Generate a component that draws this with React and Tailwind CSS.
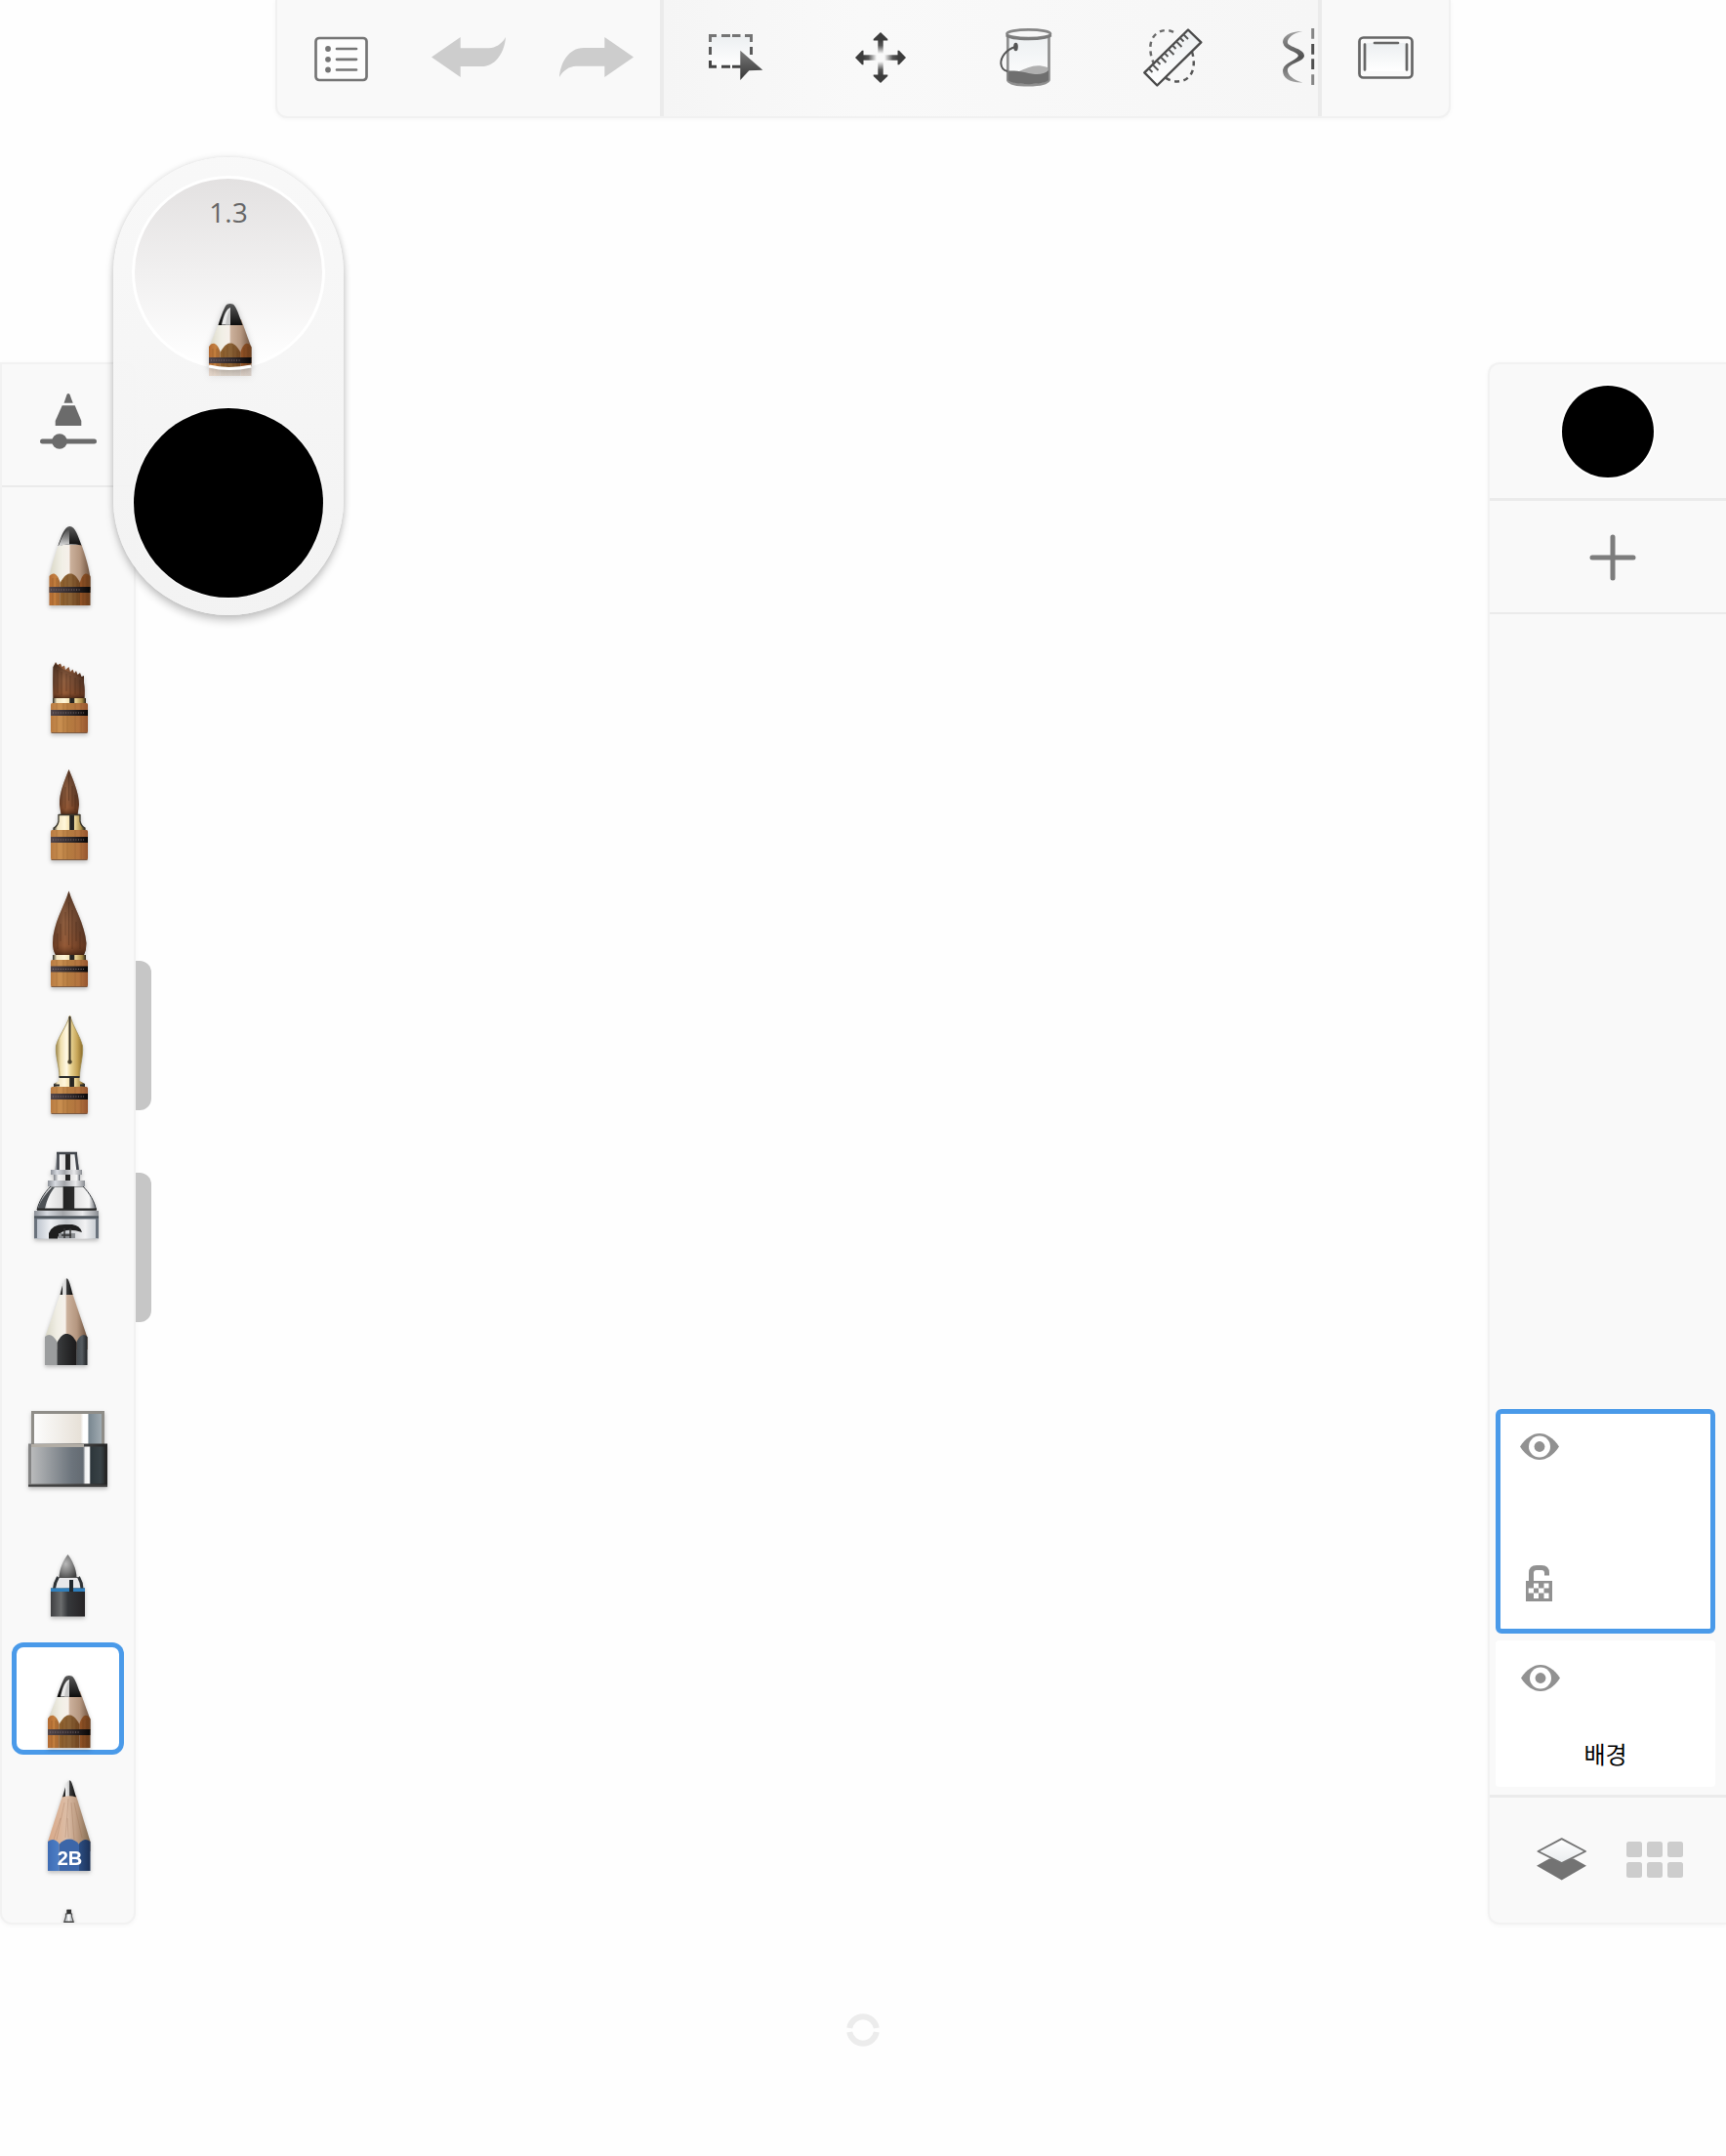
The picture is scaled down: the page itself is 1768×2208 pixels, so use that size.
import React, { useState } from 'react';
import clsx from 'clsx';

const BAND = { x: 40, width: 38, height: 6 };

// gradients shared by every drawing on the page
function PaintDefs() {
  return (
    <svg className="absolute size-0" aria-hidden="true">
      <defs>
        <linearGradient id="lead">
          <stop offset="0" stopColor="#333" />
          <stop offset="0.18" stopColor="#222" />
          <stop offset="0.24" stopColor="#eee" />
          <stop offset="0.48" stopColor="#ccc" />
          <stop offset="0.54" stopColor="#3a3a3a" />
          <stop offset="1" stopColor="#0c0c0c" />
        </linearGradient>
        <linearGradient id="softLead" x2="0" y2="1">
          <stop offset="0" stopColor="#4b4b4b" />
          <stop offset="0.5" stopColor="#8d8d8d" />
          <stop offset="1" stopColor="#e9e9e9" />
        </linearGradient>
        <linearGradient id="darkLead" x2="0" y2="1">
          <stop offset="0" stopColor="#585858" />
          <stop offset="1" stopColor="#0d0d0d" />
        </linearGradient>
        <linearGradient id="cone">
          <stop offset="0" stopColor="#d9d7c6" />
          <stop offset="0.3" stopColor="#f1efe6" />
          <stop offset="0.48" stopColor="#f6f0ea" />
          <stop offset="0.52" stopColor="#cbb09b" />
          <stop offset="0.75" stopColor="#b59780" />
          <stop offset="1" stopColor="#6b4f3b" />
        </linearGradient>
        <linearGradient id="rawWood">
          <stop offset="0" stopColor="#d9a887" />
          <stop offset="0.45" stopColor="#dcbda6" />
          <stop offset="0.7" stopColor="#bb9a80" />
          <stop offset="1" stopColor="#80694f" />
        </linearGradient>
        <linearGradient id="petalLeft">
          <stop offset="0" stopColor="#b26a32" />
          <stop offset="0.6" stopColor="#c4803f" />
          <stop offset="1" stopColor="#9c6230" />
        </linearGradient>
        <linearGradient id="petalMid">
          <stop offset="0" stopColor="#8f602c" />
          <stop offset="0.5" stopColor="#8a6236" />
          <stop offset="1" stopColor="#704520" />
        </linearGradient>
        <linearGradient id="petalRight">
          <stop offset="0" stopColor="#935326" />
          <stop offset="1" stopColor="#6d3f1d" />
        </linearGradient>
        <linearGradient id="handle">
          <stop offset="0" stopColor="#b87a41" />
          <stop offset="0.25" stopColor="#c98f50" />
          <stop offset="0.5" stopColor="#b57b40" />
          <stop offset="0.75" stopColor="#b3743f" />
          <stop offset="1" stopColor="#95552f" />
        </linearGradient>
        <linearGradient id="band">
          <stop offset="0" stopColor="#54474a" />
          <stop offset="0.6" stopColor="#2c2527" />
          <stop offset="1" stopColor="#080606" />
        </linearGradient>
        <linearGradient id="bristle">
          <stop offset="0" stopColor="#4e2d1c" />
          <stop offset="0.35" stopColor="#96603e" />
          <stop offset="0.6" stopColor="#77492f" />
          <stop offset="1" stopColor="#402417" />
        </linearGradient>
        <linearGradient id="bristleShade" x2="0" y2="1">
          <stop offset="0" stopColor="#3a2418" stopOpacity="0.75" />
          <stop offset="0.5" stopColor="#7a5a45" stopOpacity="0.2" />
          <stop offset="0.85" stopColor="#93502a" stopOpacity="0.35" />
          <stop offset="1" stopColor="#3a1c0d" stopOpacity="0.7" />
        </linearGradient>
        <linearGradient id="brass">
          <stop offset="0" stopColor="#2c2820" />
          <stop offset="0.12" stopColor="#f1e4c0" />
          <stop offset="0.35" stopColor="#fff6da" />
          <stop offset="0.5" stopColor="#f4e2b0" />
          <stop offset="0.52" stopColor="#222" />
          <stop offset="0.64" stopColor="#292622" />
          <stop offset="0.67" stopColor="#efd99c" />
          <stop offset="0.88" stopColor="#a98a45" />
          <stop offset="1" stopColor="#292318" />
        </linearGradient>
        <linearGradient id="nib">
          <stop offset="0" stopColor="#9b8449" />
          <stop offset="0.18" stopColor="#f0e0b0" />
          <stop offset="0.4" stopColor="#fff8e4" />
          <stop offset="0.55" stopColor="#ead495" />
          <stop offset="0.8" stopColor="#c5a456" />
          <stop offset="1" stopColor="#8a6b2a" />
        </linearGradient>
        <linearGradient id="chrome">
          <stop offset="0" stopColor="#7b7f86" />
          <stop offset="0.18" stopColor="#f4f4f4" />
          <stop offset="0.43" stopColor="#dcdcdc" />
          <stop offset="0.45" stopColor="#222" />
          <stop offset="0.62" stopColor="#2b2b2b" />
          <stop offset="0.64" stopColor="#e3e3e3" />
          <stop offset="0.88" stopColor="#f7f7f7" />
          <stop offset="1" stopColor="#5b5f66" />
        </linearGradient>
        <linearGradient id="steel">
          <stop offset="0" stopColor="#8c9097" />
          <stop offset="0.2" stopColor="#d7dae0" />
          <stop offset="0.45" stopColor="#a3a5a9" />
          <stop offset="0.75" stopColor="#e9e9eb" />
          <stop offset="1" stopColor="#8a8d92" />
        </linearGradient>
        <linearGradient id="steelLight">
          <stop offset="0" stopColor="#b9c0ca" />
          <stop offset="0.25" stopColor="#eef0f3" />
          <stop offset="0.5" stopColor="#c3c6ca" />
          <stop offset="0.8" stopColor="#f2f2f3" />
          <stop offset="1" stopColor="#c2c7cd" />
        </linearGradient>
        <linearGradient id="graphiteMid">
          <stop offset="0" stopColor="#3b3d3f" />
          <stop offset="0.7" stopColor="#232324" />
          <stop offset="1" stopColor="#1c1a1b" />
        </linearGradient>
        <linearGradient id="graphiteRight">
          <stop offset="0" stopColor="#474d52" />
          <stop offset="0.5" stopColor="#555b60" />
          <stop offset="1" stopColor="#1f2123" />
        </linearGradient>
        <linearGradient id="rubber">
          <stop offset="0" stopColor="#fdfdfd" />
          <stop offset="0.68" stopColor="#e7e1d8" />
          <stop offset="0.72" stopColor="#fff" />
          <stop offset="0.78" stopColor="#fff" />
          <stop offset="0.8" stopColor="#798790" />
          <stop offset="1" stopColor="#a5afb5" />
        </linearGradient>
        <linearGradient id="sleeve">
          <stop offset="0" stopColor="#bcbdbe" />
          <stop offset="0.55" stopColor="#6c747c" />
          <stop offset="0.7" stopColor="#646b72" />
          <stop offset="0.73" stopColor="#eee" />
          <stop offset="0.78" stopColor="#fff" />
          <stop offset="0.8" stopColor="#2d363b" />
          <stop offset="0.93" stopColor="#394246" />
          <stop offset="1" stopColor="#252829" />
        </linearGradient>
        <linearGradient id="sleeveEdge">
          <stop offset="0" stopColor="#858585" />
          <stop offset="1" stopColor="#262626" />
        </linearGradient>
        <radialGradient id="felt" cx="0.38" cy="0.42" r="0.75">
          <stop offset="0" stopColor="#b9b9b9" />
          <stop offset="0.5" stopColor="#7f7f7f" />
          <stop offset="1" stopColor="#3f3f3f" />
        </radialGradient>
        <linearGradient id="marker">
          <stop offset="0" stopColor="#3e3f41" />
          <stop offset="0.3" stopColor="#6a6c6d" />
          <stop offset="0.5" stopColor="#36383b" />
          <stop offset="1" stopColor="#262325" />
        </linearGradient>
        <linearGradient id="blueLeft">
          <stop offset="0" stopColor="#3f6cb4" />
          <stop offset="1" stopColor="#4d7fc6" />
        </linearGradient>
        <linearGradient id="blueRight">
          <stop offset="0" stopColor="#2c4e83" />
          <stop offset="1" stopColor="#1b3157" />
        </linearGradient>
        <linearGradient id="ink" x2="0" y2="1">
          <stop offset="0" stopColor="#7b7b7b" />
          <stop offset="1" stopColor="#353535" />
        </linearGradient>
        <linearGradient id="glass" x2="0" y2="1">
          <stop offset="0" stopColor="#eceff1" />
          <stop offset="1" stopColor="#ffffff" />
        </linearGradient>
        <linearGradient id="glassDown" x2="0" y2="1">
          <stop offset="0" stopColor="#ffffff" />
          <stop offset="1" stopColor="#e9ecee" />
        </linearGradient>
        <linearGradient id="fade" x2="0" y2="1">
          <stop offset="0" stopColor="#3c3c3c" />
          <stop offset="0.4" stopColor="#555" />
          <stop offset="1" stopColor="#555" stopOpacity="0" />
        </linearGradient>
        <linearGradient id="curl" x2="0" y2="1">
          <stop offset="0" stopColor="#a0a0a0" />
          <stop offset="0.5" stopColor="#505050" />
          <stop offset="1" stopColor="#a0a0a0" />
        </linearGradient>
        <clipPath id="insideDial">
          <path d="M25 25H90V96.500Q57 105 25 96.500Z" />
        </clipPath>
        <clipPath id="belowDial">
          <path d="M25 96.500Q57 105 90 96.500V120H25Z" />
        </clipPath>
      </defs>
    </svg>
  );
}

function Handle({ top, band }) {
  return (
    <g>
      <rect x="40" y={top} width="38" height={108.5 - top} rx="1.5" fill="url(#handle)" />
      <path
        d={`M46 ${top}V108M53 ${top}V108M57 ${top}V108M65 ${top}V108M71 ${top}V108`}
        stroke="#7d4a22"
        strokeOpacity="0.25"
      />
      <rect {...BAND} y={band} fill="url(#band)" />
      <path d={`M42 ${band + 3}H74`} stroke="#85787a" strokeWidth="1" strokeDasharray="1 1.6" />
      <path d="M40.500 108.500H77.500" stroke="#5e3c26" strokeOpacity="0.7" />
    </g>
  );
}

function Petals() {
  return (
    <g>
      <path d="M37 78C40 73 45 73 48.500 83V108H37Z" fill="url(#petalLeft)" />
      <path d="M69.500 83C73 73 77 73 80.500 78V108H69.500Z" fill="url(#petalRight)" />
      <path d="M48.500 84C53 76 56 74.500 59 74.500C62 74.500 65 76 69.500 84V108H48.500Z" fill="url(#petalMid)" />
      <path d="M41 80V108M45 80V108M52 82V108M56 77V108M62 77V108M66 82V108M73 79V108M77 78V108" stroke="#5c3310" strokeOpacity="0.25" />
      <rect x="37" y="89" width="43.500" height="6" fill="url(#band)" />
      <path d="M39 92H70" stroke="#85787a" strokeDasharray="1 1.6" />
    </g>
  );
}

function CharcoalTip() {
  return (
    <g>
      <path d="M49 50L37 79V90H80.500V79L70 50Z" fill="url(#cone)" />
      <path d="M46.500 56C49 48 52 40 54 36.500C56 33.300 61.500 33.300 63.500 36.500C66 40 69 49 71.500 56Z" fill="url(#darkLead)" />
      <path d="M50 55.500C52 46 55 39 59 38V55.500Z" fill="#e9e9e9" />
      <path d="M54 55.500C55 48 57 41 59 39V55.500Z" fill="#c8c8c8" />
      <Petals />
    </g>
  );
}

const BRUSHES = [
  {
    name: 'Pencil',
    art: (
      <g>
        <path d="M48 46C43 60 39.500 72 38.500 80V92H80.500V80C79 68 75 56 71.500 46Z" fill="url(#cone)" />
        <path d="M47.500 47C51 37 54 27 59.500 27C65 27 68 37 71.500 46.500Q59 44 47.500 47Z" fill="url(#darkLead)" />
        <path d="M49 44.500C52 36 55 31 59 30V45.500Q52 45 47.500 48Z" fill="url(#softLead)" />
        <path d="M38.500 78C42 74 46 74 49.500 84V108H38.500Z" fill="url(#petalLeft)" />
        <path d="M70 84C73 74 77 74 80.500 78V108H70Z" fill="url(#petalRight)" />
        <path d="M49.500 85C54 77 57 75.500 60 75.500C63 75.500 66 77 70 85V108H49.500Z" fill="url(#petalMid)" />
        <path d="M42 80V108M46 80V108M53 82V108M57 77V108M63 77V108M67 82V108M73 79V108M77 78V108" stroke="#5c3310" strokeOpacity="0.25" />
        <rect x="38.500" y="89" width="42" height="6" fill="url(#band)" />
        <path d="M40 92H70" stroke="#85787a" strokeDasharray="1 1.6" />
      </g>
    ),
  },
  {
    name: 'Flat brush',
    art: (
      <g>
        <path d="M42.500 73C42 60 42 50 42.500 41L45 36L47 39L50 37.500L51.500 41L54 39.500L55 44L58.500 41L60 46L62.500 43.500L64 47.500L66 45L67.500 49L70 47L71.500 51L74 50V57C75 62 75 68 74.500 73Z" fill="url(#bristle)" />
        <path d="M42.500 73C42 60 42 50 42.500 41L45 38L52 43L60 47L68 51L74 53V57C75 62 75 68 74.500 73Z" fill="url(#bristleShade)" />
        <path d="M47 44V68M51 46V70M56 48V66M60 50V71M65 52V69M70 54V70" stroke="#2f180b" strokeOpacity="0.3" />
        <rect x="42" y="73" width="34" height="5" fill="url(#brass)" />
        <Handle top={78} band={85} />
      </g>
    ),
  },
  {
    name: 'Round brush',
    art: (
      <g>
        <path d="M58.500 16C54 28 48.500 40 49 52L50.500 62H67.500L69 52C69 40 63 27 58.500 16Z" fill="url(#bristle)" />
        <path d="M58.500 16C54 28 48.500 40 49 52L50.500 62H67.500L69 52C69 40 63 27 58.500 16Z" fill="url(#bristleShade)" />
        <path d="M58.500 22V48M55 34V56M62 33V54M65 42V58" stroke="#2f180b" strokeOpacity="0.3" />
        <path d="M48 62H70V69Q71 74 75 76V78H43V76Q47 74 48 69Z" fill="url(#brass)" />
        <path d="M48 62V69Q47 74 43 76V78M70 62V69Q71 74 75 76V78M48 62.500H70" fill="none" stroke="#3a362c" strokeWidth="1.300" />
        <Handle top={78} band={85} />
      </g>
    ),
  },
  {
    name: 'Wash brush',
    art: (
      <g>
        <path d="M58.500 10.500C54 26 42 44 42 64Q42 71 45 76H74Q76.500 71 76.500 64C75 44 63 26 58.500 10.500Z" fill="url(#bristle)" />
        <path d="M58.500 10.500C54 26 42 44 42 64Q42 71 45 76H74Q76.500 71 76.500 64C75 44 63 26 58.500 10.500Z" fill="url(#bristleShade)" />
        <path d="M58.500 22V66M55 32V56M62 30V70M50 44V62M66 42V62M70 52V70M47 54V70" stroke="#2f180b" strokeOpacity="0.3" />
        <rect x="42" y="76" width="34" height="5" fill="url(#brass)" />
        <Handle top={81} band={87.5} />
      </g>
    ),
  },
  {
    name: 'Fountain pen',
    art: (
      <g>
        <path d="M59.500 8C56 20 48 29 45.500 39C44.500 50 49 60 49 71H69.500C69.500 60 73.500 50 72.500 39C70 29 63 20 59.500 8Z" fill="url(#nib)" stroke="#a08b4e" strokeWidth="0.800" />
        <path d="M59.500 9V55" stroke="#383225" strokeWidth="2" />
        <circle cx="59.500" cy="55.500" r="2.200" fill="#4c432e" />
        <path d="M48.500 71H69.500V75L75 78V81H43V78L48.500 75Z" fill="url(#brass)" />
        <path d="M48.500 71H69.500M43 79.500H49M70 79.500H75" stroke="#2b2b2b" strokeWidth="2" />
        <Handle top={81} band={88} />
      </g>
    ),
  },
  {
    name: 'Airbrush',
    art: (
      <g>
        <path d="M46.500 18.500H66.500L69 36H44.500Z" fill="url(#chrome)" />
        <path d="M47.500 18V36M65.500 18L67.500 36M46 19H67" stroke="#42464c" strokeWidth="2.500" />
        <rect x="43" y="41" width="27" height="6" fill="url(#chrome)" />
        <rect x="40" y="36" width="32" height="5" fill="url(#steel)" />
        <path d="M40 53H73C80 60 85 69 86.500 77H26C28 68 33 60 40 53Z" fill="url(#chrome)" stroke="#33373b" />
        <path d="M41 54C34 61 29 69 27 76H34C36 67 39 60 44 54Z" fill="#4c5054" />
        <path d="M26 76.500H87" stroke="#262626" strokeWidth="2" />
        <rect x="37" y="47" width="38" height="6" fill="url(#steel)" />
        <rect x="23" y="78" width="66" height="28.500" fill="url(#steel)" />
        <rect x="24" y="85.500" width="64" height="21" fill="url(#steelLight)" />
        <path d="M24.500 106V85H87.500V106" fill="none" stroke="#6a727c" strokeWidth="3" />
        <path d="M23 84.500H89" stroke="#4b5258" strokeWidth="2" />
        <path d="M38 106.500V101Q41 92 54 92H62Q70 93 72 100Q60 96 53 99Q48 101 47 106.500Z" fill="#1f1f1f" />
        <path d="M48 106V101H65V106Z" fill="#8a8d90" />
        <path d="M51 103H61M54 96V106M60 96V106" stroke="#333" strokeWidth="1.500" />
      </g>
    ),
  },
  {
    name: 'Drawing pencil',
    art: (
      <g>
        <path d="M50 32L34 78V90H77.500V78L62 32Z" fill="url(#cone)" />
        <path d="M49.500 34C51 28 53 20 54.500 18Q56 16.500 57.500 18C59 20 61 28 62.500 34Z" fill="url(#lead)" />
        <path d="M34 77Q40 71 46.500 82V106H34Z" fill="#9b9d9e" />
        <path d="M66.500 82Q72 71 77.500 77V106H66.500Z" fill="url(#graphiteRight)" />
        <path d="M46.500 83C50 76 53 74 56 74C60 74 63 76 66.500 83V106H46.500Z" fill="url(#graphiteMid)" />
      </g>
    ),
  },
  {
    name: 'Eraser',
    art: (
      <g>
        <rect x="21.500" y="24.500" width="72" height="35" fill="url(#rubber)" stroke="#8f8d88" strokeWidth="3" />
        <rect x="18.500" y="58" width="78" height="41" fill="url(#sleeve)" stroke="url(#sleeveEdge)" strokeWidth="3" />
        <path d="M20 58.500H74" stroke="#b2ada5" strokeWidth="3" />
        <path d="M17 99.500H98" stroke="#3e3e3e" strokeWidth="2" />
      </g>
    ),
  },
  {
    name: 'Marker',
    art: (
      <g>
        <path d="M57.500 40C53 46 49 54 48.500 63H66.500C66 54 62 46 57.500 40Z" fill="url(#felt)" />
        <path d="M46.500 63H69L73 75.500H43Z" fill="#e8e8ea" />
        <path d="M47.500 63Q44 69 43.500 75M68.500 63Q72 69 72 75" fill="none" stroke="#2f3336" strokeWidth="3" />
        <rect x="40" y="74.500" width="35" height="29" fill="url(#marker)" />
        <path d="M40 76.300H75" stroke="#2f7fbc" strokeWidth="3.500" />
        <rect x="59" y="66" width="4" height="12" fill="#20282e" />
        <path d="M47 63.500H69" stroke="#555" />
      </g>
    ),
  },
  { name: 'Charcoal pencil', art: <CharcoalTip /> },
  {
    name: '2B pencil',
    art: (
      <g>
        <path d="M52 27L37 74V84H80.500V74L66 27Z" fill="url(#rawWood)" />
        <path d="M54 34L46 72M58 30L55 70M61 34L64 72M64 34L72 70M50 50L43 72M57 50L58 70" stroke="#8b6144" strokeOpacity="0.25" />
        <path d="M52 28.500C54 22 56 14 57.500 12Q59 10.500 60.500 12C62 14 64 22 66 28.500Q59 26 52 28.500Z" fill="url(#lead)" />
        <path d="M37 74Q43 69 48.500 76V104H37Z" fill="url(#blueLeft)" />
        <path d="M69 76Q75 69 80.500 74V104H69Z" fill="url(#blueRight)" />
        <path d="M48.500 77Q53 71.500 59 71.500Q65 71.500 69 77V104H48.500Z" fill="#3c66a8" />
        <text x="59.500" y="98" textAnchor="middle" fill="#fff" className="font-['Liberation_Sans',sans-serif] text-[20px] font-bold">
          2B
        </text>
      </g>
    ),
  },
  {
    name: 'Fine liner',
    art: (
      <g>
        <path d="M57 14H60.500V18H61.500V21L63.500 27V60H53.500V27L55.500 21V18H57Z" fill="#c9cdd0" stroke="#555" strokeWidth="1.200" />
        <path d="M56.500 14H61V18H56.500Z" fill="#333" />
        <path d="M58.500 19V26" stroke="#fff" strokeWidth="2" />
        <rect x="54" y="25.500" width="9" height="30" fill="#444" />
      </g>
    ),
  },
];

function BrushArt({ children }) {
  return (
    <svg viewBox="0 0 115 115" className="size-full drop-shadow-[0_2px_2px_rgba(0,0,0,0.25)]">
      {children}
    </svg>
  );
}

function ListIcon() {
  return (
    <svg width="55" height="50" viewBox="0 0 55 50" fill="none" stroke="#757575" strokeWidth="2.700">
      <rect x="1.500" y="5" width="52" height="43" rx="3.500" fill="#fdfdfd" />
      <path d="M23 16H43M23 26.800H43M23 37.500H43" strokeLinecap="round" />
      <g fill="#757575" stroke="none">
        <circle cx="14" cy="16" r="2.900" />
        <circle cx="14" cy="26.800" r="2.900" />
        <circle cx="14" cy="37.500" r="2.900" />
      </g>
    </svg>
  );
}

function SwooshArrow({ className }) {
  return (
    <svg width="76" height="41" viewBox="0 0 76 41" fill="#cdcdcd" className={className}>
      <path d="M0 20.500L29.700 0V11.300H59C66 11 72 7 76 0C75 14 67 30 51 30H29.700V41Z" />
    </svg>
  );
}

function SelectIcon() {
  return (
    <svg width="56" height="47" viewBox="0 0 56 47">
      <rect x="1.500" y="1.500" width="42" height="32" fill="url(#glass)" />
      <path d="M0 1.500H8M13 1.500H22M24 1.500H32.500M37 1.500H45M1.500 0V8M43.500 0V8" stroke="#747474" strokeWidth="3" />
      <path d="M1.500 13V21M43.500 13V21" stroke="#5a5a5a" strokeWidth="3" />
      <path d="M1.500 27V34.500M0 33.300H8M13 33.300H22M24 33.300H33" stroke="#444" strokeWidth="3" />
      <path d="M32.300 16.700L55.300 36.700L41.300 37.300L32.300 47Z" fill="url(#ink)" />
    </svg>
  );
}

function MoveIcon() {
  return (
    <svg width="52" height="52" viewBox="0 0 52 52">
      {[0, 90, 180, 270].map((angle) => (
        <g key={angle} transform={`rotate(${angle} 26 26)`}>
          <path d="M26 0L33.300 7L33.300 8.500H18.700V7Z" fill="#3c3c3c" />
          <rect x="23.300" y="8" width="5.400" height="14" fill="url(#fade)" />
        </g>
      ))}
    </svg>
  );
}

function BucketIcon() {
  return (
    <svg width="54" height="60" viewBox="0 0 54 60">
      <path d="M8.300 7V53C12 60 47 60 50.500 53V7Z" fill="url(#glass)" stroke="#8f8f8f" strokeWidth="2.700" />
      <path d="M18 45C30 40 36 36 49 40V49H25Z" fill="#b0b0b0" />
      <path d="M8.500 43.500C20 43 26 45.500 36 47C42 47.500 47 46 50 43V53C46 58.500 13 58.500 8.500 53Z" fill="#6f6f6f" />
      <ellipse cx="29.700" cy="5.800" rx="22.300" ry="4.400" fill="#f7f7f7" stroke="#868686" strokeWidth="2.700" />
      <path d="M7 7C12 12 47 12 52.500 7" fill="none" stroke="#7a7a7a" strokeWidth="3" />
      <path d="M16 19C6 22 1 30 1.300 36C1.700 41 4 43 8 44" fill="none" stroke="#555" strokeWidth="2" />
      <ellipse cx="16.500" cy="19" rx="2.300" ry="4.200" fill="#555" />
    </svg>
  );
}

function RulerIcon() {
  return (
    <svg width="61" height="60" viewBox="0 0 61 60" fill="none">
      <path d="M31 3.800C22 -1 9 4 7.500 17C7 24 8 30 11 36" stroke="#6a6a6a" strokeWidth="2.500" strokeDasharray="5 4.500" />
      <path d="M50 24C53 34 53 46 44 52C37 56 29 55 22 50" stroke="#555" strokeWidth="2.500" strokeDasharray="5 4.500" />
      <path d="M46 1.500L59.300 14.300L14.300 58.500L1.300 45.300Z" fill="url(#glass)" stroke="#4a4a4a" strokeWidth="2.400" strokeLinejoin="round" />
      <path
        d="M5.500 41l4 4M9.500 37l6 6M13.500 33l4 4M17.500 29l6 6M21.500 25l4 4M25.500 21l6 6M29.500 17l4 4M33.500 13l6 6M37.500 9.500l4 4M41 6l5 5"
        stroke="#555"
        strokeWidth="1.900"
      />
    </svg>
  );
}

function SymmetryIcon() {
  return (
    <svg width="70" height="59" viewBox="0 0 70 59" className="shrink-0">
      <path
        d="M20.500 3C5 3 -1 10 0.200 15C2 23 14 23 16 28C14 33 2 35 0.200 42C-1 49 5 56 20.500 55.500C10 53 4 47 5 42C6 36 22 34 22 28C22 21 6 19 5 15C4 11 10 4.500 20.500 3Z"
        fill="url(#curl)"
      />
      <path d="M30.700 0V10.700M30.700 47.300V58" stroke="#858585" strokeWidth="3" />
      <path d="M30.700 16V26.700M30.700 31.300V42" stroke="#4f4f4f" strokeWidth="3" />
      <path d="M41 3C56 3 62 10 61 15C59 23 47 23 45 28C47 33 59 35 61 42C62 49 56 56 41 55.500" fill="none" stroke="#777" strokeWidth="3" />
    </svg>
  );
}

function FrameIcon() {
  return (
    <svg width="57" height="44" viewBox="0 0 57 44" fill="none" stroke="#666" strokeWidth="2.700">
      <rect x="1.500" y="1.500" width="54" height="41" rx="4" fill="#fafafa" />
      <rect x="7" y="7" width="43" height="29" fill="url(#glass)" stroke="none" />
      <path d="M7 8.500V34.500M50 8.500V34.500M17 7H41" strokeLinecap="round" />
    </svg>
  );
}

function BrushSettingsIcon() {
  return (
    <svg width="58" height="57" viewBox="0 0 58 57" fill="#6b6b6b">
      <path d="M27.500 1Q29 -1 30.500 1L33.700 9.700H24.500Z" />
      <path d="M22.700 12.300H35.700L42.300 28V33H15.700V28Z" />
      <path d="M2.500 49H55.500" stroke="#6b6b6b" strokeWidth="5" strokeLinecap="round" />
      <circle cx="20" cy="49" r="7.800" />
    </svg>
  );
}

function EyeIcon() {
  return (
    <svg width="40" height="27" viewBox="0 0 40 27">
      <path d="M0 13.500C12 -4.500 28 -4.500 40 13.500C28 31.500 12 31.500 0 13.500Z" fill="#919191" />
      <circle cx="20" cy="13.500" r="11" fill="#fff" />
      <circle cx="20" cy="13.500" r="5.400" fill="#919191" />
    </svg>
  );
}

function AlphaLockIcon() {
  return (
    <svg width="27" height="37" viewBox="0 0 27 37">
      <path d="M5.500 17V8Q5.500 2.500 11 2.500H16Q21.500 2.500 21.500 8V10.500" fill="none" stroke="#919191" strokeWidth="5" />
      <rect y="16" width="27" height="21" fill="#919191" />
      <path d="M8 18.500h5v5h-5zM18.500 18.500h5v5h-5zM2.700 23.500h5.300v5h-5.300zM13 23.500h5.500v5h-5.500zM8 28.500h5v5.500h-5zM18.500 28.500h5v5.500h-5z" fill="#fff" />
    </svg>
  );
}

function LayersIcon() {
  return (
    <svg width="51" height="44" viewBox="0 0 51 44">
      <path d="M0 28.700L13 21.500H38L51 28.700L25.700 43.500Z" fill="#737373" />
      <path d="M25.700 1.200L50 14L25.700 26.200L1.500 14Z" fill="url(#glassDown)" stroke="#757575" strokeWidth="1.900" strokeLinejoin="round" />
    </svg>
  );
}

function GridIcon() {
  return (
    <svg width="58" height="37" viewBox="0 0 58 37" fill="#cdcdcd">
      {[0, 21, 42].map((x) => (
        <g key={x}>
          <rect x={x} width="16" height="16" rx="2.500" />
          <rect x={x} y="21" width="16" height="16" rx="2.500" />
        </g>
      ))}
    </svg>
  );
}

function ToolButton({ label, className, children }) {
  return (
    <button type="button" aria-label={label} className={clsx('flex shrink-0 items-center justify-center pb-0.5', className)}>
      {children}
    </button>
  );
}

function Toolbar() {
  return (
    <header className="flex justify-center">
      <div className="flex h-[121px] max-w-full rounded-b-xl border-2 border-t-0 border-[#f1f1f1] bg-[#f9f9f9] shadow-[0_1px_4px_rgba(0,0,0,0.04)]">
        <div className="flex">
          <ToolButton label="Menu" className="w-[130px]"><ListIcon /></ToolButton>
          <ToolButton label="Undo" className="w-[131px]"><SwooshArrow /></ToolButton>
          <ToolButton label="Redo" className="w-[131px]"><SwooshArrow className="rotate-180" /></ToolButton>
        </div>
        <div className="flex w-[678px] overflow-hidden border-x-4 border-[#ebebeb] bg-linear-to-r from-[#f5f5f5] via-[#f9f9f9] via-30% to-[#f6f6f6]">
          <ToolButton label="Select" className="w-[147px]"><SelectIcon /></ToolButton>
          <ToolButton label="Transform" className="w-[150px]"><MoveIcon /></ToolButton>
          <ToolButton label="Fill" className="w-[148px]"><BucketIcon /></ToolButton>
          <ToolButton label="Guides" className="w-[152px]"><RulerIcon /></ToolButton>
          <ToolButton label="Symmetry" className="w-36"><SymmetryIcon /></ToolButton>
        </div>
        <ToolButton label="Full screen" className="w-[130px]"><FrameIcon /></ToolButton>
      </div>
    </header>
  );
}

function BrushPanel() {
  const [active, setActive] = useState(9);

  return (
    <div className="flex">
      <aside className="flex w-[139px] flex-col overflow-hidden rounded-b-xl rounded-tr-xl border-2 border-[#f2f2f2] bg-[#f9f9f9] shadow-[0_1px_4px_rgba(0,0,0,0.04)]">
        <button type="button" aria-label="Brush settings" className="flex h-[126px] shrink-0 items-center justify-center border-b-2 border-[#ebebeb] pb-2">
          <BrushSettingsIcon />
        </button>
        <div className="flex min-h-0 flex-1 flex-col items-center gap-[15px] overflow-hidden pt-[13px]">
          {BRUSHES.map((brush, i) => (
            <button
              key={brush.name}
              type="button"
              aria-label={brush.name}
              aria-pressed={i === active}
              onClick={() => setActive(i)}
              className={clsx('size-[115px] shrink-0 rounded-xl', i === active && 'bg-white inset-ring-5 inset-ring-[#4a9ae9]')}
            >
              <BrushArt>{brush.art}</BrushArt>
            </button>
          ))}
        </div>
      </aside>
      <div className="flex flex-col justify-center gap-16 pb-1">
        <button type="button" aria-label="Brush size" className="h-[153px] w-4 rounded-r-xl bg-[#c6c6c6]" />
        <button type="button" aria-label="Brush opacity" className="h-[153px] w-4 rounded-r-xl bg-[#c6c6c6]" />
      </div>
    </div>
  );
}

function Puck() {
  return (
    <div className="absolute top-[161px] left-[116px] flex w-[236px] flex-col items-center gap-10 rounded-full bg-linear-to-b from-[#f8f8f8]/95 to-[#f2f2f2]/95 pt-[19px] pb-[18px] shadow-[0_6px_8px_rgba(0,0,0,0.2),0_0_6px_rgba(0,0,0,0.12)]">
      <button
        type="button"
        className="relative flex size-[198px] justify-center rounded-full border-[3px] border-white bg-linear-to-b from-[#e3e1e1] to-white pt-4 font-['Open_Sans',sans-serif] text-[28px] leading-9 font-normal text-[#666]"
      >
        1.3
        <svg width="52" height="84" viewBox="33 32 52 84" className="absolute top-[126px] left-[72px] drop-shadow-[0_2px_3px_rgba(0,0,0,0.25)]">
          <g clipPath="url(#insideDial)">
            <CharcoalTip />
          </g>
          <g clipPath="url(#belowDial)" opacity="0.2">
            <CharcoalTip />
          </g>
          <path d="M37 98Q57 103 80.500 98" fill="none" stroke="#fff" strokeWidth="3" />
        </svg>
      </button>
      <button type="button" aria-label="Color" className="size-[194px] rounded-full bg-black ring-1 ring-white" />
    </div>
  );
}

function LayerPanel() {
  return (
    <aside className="flex w-[244px] flex-col rounded-l-xl border-2 border-r-0 border-[#f2f2f2] bg-[#f9f9f9] shadow-[0_1px_4px_rgba(0,0,0,0.04)]">
      <div className="flex h-[140px] items-center justify-center border-b-3 border-[#ebebeb]">
        <button type="button" aria-label="Layer color" className="size-[94px] rounded-full bg-black ring-2 ring-white" />
      </div>
      <button type="button" aria-label="Add layer" className="flex h-[116px] items-center justify-center border-b-2 border-[#ebebeb] pt-0.5 pl-2.5">
        <svg width="48" height="48" viewBox="0 0 48 48" stroke="#7d7d7d" strokeWidth="5" strokeLinecap="round">
          <path d="M24 3V45M3 24H45" />
        </svg>
      </button>
      <ul className="flex flex-1 flex-col justify-end gap-[7px] pr-[11px] pb-2 pl-1.5">
        <li className="flex h-[230px] flex-col items-start justify-between rounded-md border-5 border-[#4a9ae9] bg-white pt-5 pb-7 pl-5">
          <button type="button" aria-label="Hide layer"><EyeIcon /></button>
          <button type="button" aria-label="Lock transparency" className="pl-1.5"><AlphaLockIcon /></button>
        </li>
        <li className="flex h-[150px] flex-col justify-between rounded-sm bg-white pt-[25px] pb-4">
          <button type="button" aria-label="Hide background" className="self-start pl-[26px]"><EyeIcon /></button>
          <span className="text-center font-['Noto_Sans_CJK_KR',sans-serif] text-[24px] leading-9 text-black">배경</span>
        </li>
      </ul>
      <div className="flex h-[131px] items-center justify-center gap-[41px] border-t-3 border-[#ebebeb] pb-0.5 pl-1">
        <button type="button" aria-label="Layers"><LayersIcon /></button>
        <button type="button" aria-label="Gallery"><GridIcon /></button>
      </div>
    </aside>
  );
}

export default function App() {
  return (
    <div className="relative flex h-screen flex-col overflow-hidden bg-[#fefefe]">
      <PaintDefs />
      <Toolbar />
      <main className="flex min-h-0 flex-1 justify-between pt-[250px]">
        <BrushPanel />
        <LayerPanel />
      </main>
      <footer className="flex justify-center pt-[91px] pb-28">
        <button type="button" aria-label="Show puck">
          <svg width="34" height="34" viewBox="0 0 34 34" fill="none" stroke="#ececec" strokeWidth="6">
            <path d="M3.200 15A14 14 0 0 1 30.800 15M3.200 19A14 14 0 0 0 30.800 19" />
          </svg>
        </button>
      </footer>
      <Puck />
    </div>
  );
}
